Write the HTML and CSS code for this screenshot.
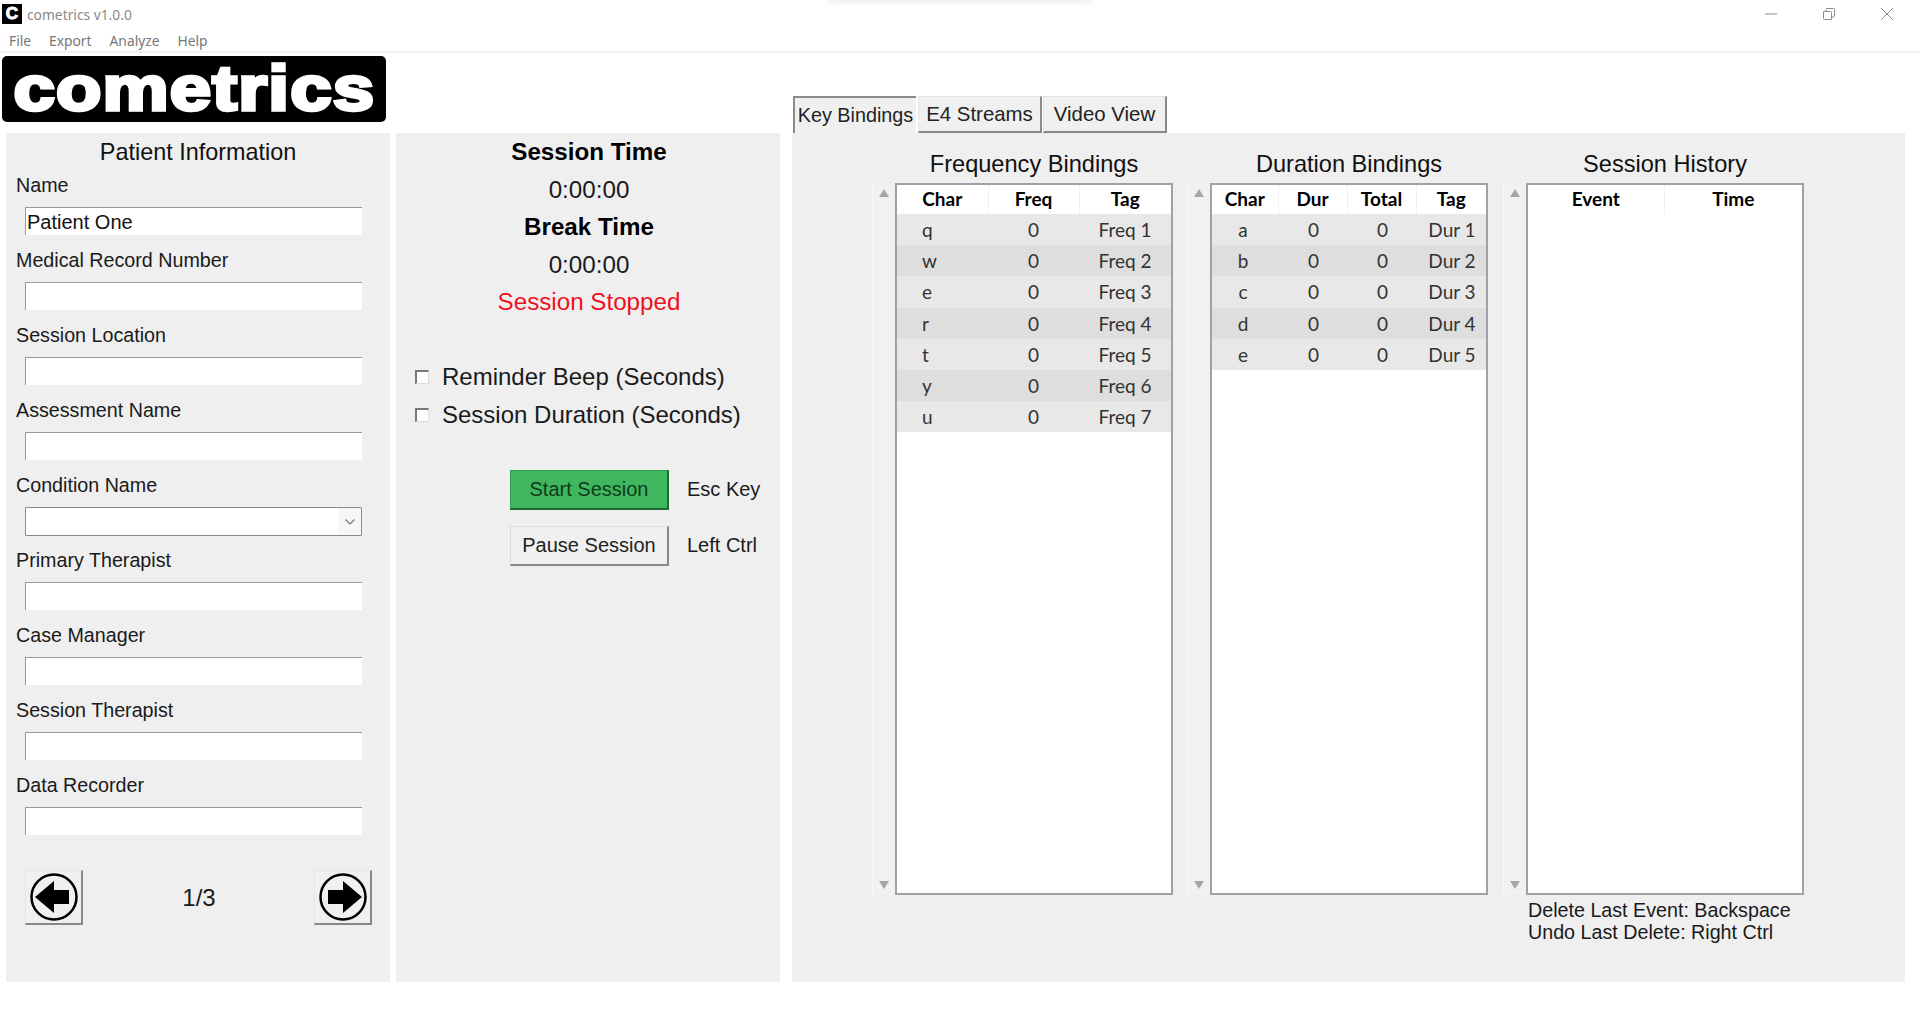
FILE: index.html
```html
<!DOCTYPE html>
<html lang="en">
<head>
  <meta charset="UTF-8" />
  <title>cometrics v1.0.0</title>
  <link rel="stylesheet" href="styles.css">
</head>
<body>
  <div class="window-shadow"></div>

  <header class="titlebar">
    <span class="app-icon">C</span>
    <span class="app-title">cometrics v1.0.0</span>
    <div class="window-controls">
      <svg width="14" height="14" viewBox="0 0 14 14"><path d="M1 7h12" /></svg>
      <svg width="14" height="14" viewBox="0 0 14 14"><path d="M1.5 4.5h7a1 1 0 0 1 1 1v7h-7a1 1 0 0 1-1-1z M4 4.5V2.5a1 1 0 0 1 1-1h6.5a1 1 0 0 1 1 1V9a1 1 0 0 1-1 1h-2" /></svg>
      <svg width="14" height="14" viewBox="0 0 14 14"><path d="M1 1l12 12M13 1L1 13" /></svg>
    </div>
  </header>

  <nav class="menubar">
    <span>File</span>
    <span>Export</span>
    <span>Analyze</span>
    <span>Help</span>
  </nav>

  <main class="workspace">
    <div class="logo"><span class="logo-text">cometrics</span></div>

    <div class="tabs">
      <div class="tab tab-active">Key Bindings</div>
      <div class="tab">E4 Streams</div>
      <div class="tab">Video View</div>
    </div>

    <!-- Patient form -->
    <section class="panel patient-panel">
      <h2 class="patient-title">Patient Information</h2>

      <div class="field">
        <label>Name</label>
        <input type="text" value="Patient One" />
      </div>
      <div class="field">
        <label>Medical Record Number</label>
        <input type="text" />
      </div>
      <div class="field">
        <label>Session Location</label>
        <input type="text" />
      </div>
      <div class="field">
        <label>Assessment Name</label>
        <input type="text" />
      </div>
      <div class="field">
        <label>Condition Name</label>
        <div class="combo">
          <span class="combo-text"></span>
          <span class="combo-arrow">
            <svg width="12" height="8" viewBox="0 0 12 8"><path d="M1.5 1.5L6 6l4.5-4.5" /></svg>
          </span>
        </div>
      </div>
      <div class="field">
        <label>Primary Therapist</label>
        <input type="text" />
      </div>
      <div class="field">
        <label>Case Manager</label>
        <input type="text" />
      </div>
      <div class="field">
        <label>Session Therapist</label>
        <input type="text" />
      </div>
      <div class="field">
        <label>Data Recorder</label>
        <input type="text" />
      </div>

      <div class="pager">
        <button class="arrow-btn">
          <svg width="50" height="48" viewBox="0 0 50 48">
            <circle cx="25" cy="24" r="22.5" />
            <path class="arrow-fill" d="M6 24L25 8v9h15v14H25v9z" />
          </svg>
        </button>
        <span class="page-num">1/3</span>
        <button class="arrow-btn">
          <svg width="50" height="48" viewBox="0 0 50 48">
            <circle cx="25" cy="24" r="22.5" />
            <path class="arrow-fill" d="M44 24L25 8v9H10v14h15v9z" />
          </svg>
        </button>
      </div>
    </section>

    <!-- Session status -->
    <section class="panel session-panel">
      <div class="status-line status-head">Session Time</div>
      <div class="status-line">0:00:00</div>
      <div class="status-line status-head">Break Time</div>
      <div class="status-line">0:00:00</div>
      <div class="status-line status-stopped">Session Stopped</div>

      <div class="check-list">
        <div class="check-row"><span class="checkbox"></span>Reminder Beep (Seconds)</div>
        <div class="check-row"><span class="checkbox"></span>Session Duration (Seconds)</div>
      </div>

      <div class="action-row">
        <button class="action-btn start-btn">Start Session</button>
        <span>Esc Key</span>
      </div>
      <div class="action-row">
        <button class="action-btn">Pause Session</button>
        <span>Left Ctrl</span>
      </div>
    </section>

    <!-- Key bindings tab -->
    <section class="panel bindings-panel">
      <div class="binding">
        <h3 class="binding-title">Frequency Bindings</h3>
        <div class="scroll-strip"><span class="scroll-up"></span><span class="scroll-down"></span></div>
        <div class="table-box">
          <table class="freq-table">
            <thead>
              <tr><th>Char</th><th>Freq</th><th>Tag</th></tr>
            </thead>
            <tbody>
              <tr><td>q</td><td>0</td><td>Freq 1</td></tr>
              <tr><td>w</td><td>0</td><td>Freq 2</td></tr>
              <tr><td>e</td><td>0</td><td>Freq 3</td></tr>
              <tr><td>r</td><td>0</td><td>Freq 4</td></tr>
              <tr><td>t</td><td>0</td><td>Freq 5</td></tr>
              <tr><td>y</td><td>0</td><td>Freq 6</td></tr>
              <tr><td>u</td><td>0</td><td>Freq 7</td></tr>
            </tbody>
          </table>
        </div>
      </div>

      <div class="binding">
        <h3 class="binding-title">Duration Bindings</h3>
        <div class="scroll-strip"><span class="scroll-up"></span><span class="scroll-down"></span></div>
        <div class="table-box">
          <table class="dur-table">
            <thead>
              <tr><th>Char</th><th>Dur</th><th>Total</th><th>Tag</th></tr>
            </thead>
            <tbody>
              <tr><td>a</td><td>0</td><td>0</td><td>Dur 1</td></tr>
              <tr><td>b</td><td>0</td><td>0</td><td>Dur 2</td></tr>
              <tr><td>c</td><td>0</td><td>0</td><td>Dur 3</td></tr>
              <tr><td>d</td><td>0</td><td>0</td><td>Dur 4</td></tr>
              <tr><td>e</td><td>0</td><td>0</td><td>Dur 5</td></tr>
            </tbody>
          </table>
        </div>
      </div>

      <div class="binding binding-history">
        <h3 class="binding-title">Session History</h3>
        <div class="scroll-strip"><span class="scroll-up"></span><span class="scroll-down"></span></div>
        <div class="table-box">
          <table class="history-table">
            <thead>
              <tr><th>Event</th><th>Time</th></tr>
            </thead>
          </table>
        </div>
        <div class="history-notes">
          <div>Delete Last Event: Backspace</div>
          <div>Undo Last Delete: Right Ctrl</div>
        </div>
      </div>
    </section>
  </main>
</body>
</html>
```

FILE: styles.css
```css
* {
  box-sizing: border-box;
}

body {
  margin: 0;
  height: 1020px;
  overflow: hidden;
  background: white;
  color: #1a1a1a;
  font-family: "Liberation Sans", Arial, sans-serif;
}

/* shadow of another window, just above the screen edge */
.window-shadow {
  position: absolute;
  top: -8px;
  left: 828px;
  width: 264px;
  height: 8px;
  box-shadow: 0 0 8px rgba(0,0,0,0.14);
}

/* window chrome */
.titlebar {
  height: 28px;
  display: flex;
  align-items: center;
  padding-left: 2px;
}

.app-icon {
  width: 20px;
  height: 20px;
  background: #000;
  color: white;
  font-size: 17px;
  font-weight: bold;
  line-height: 20px;
  text-align: center;
  -webkit-text-stroke: 1px white;
}

.app-title {
  margin-left: 5px;
  font-family: "Noto Sans", sans-serif;
  font-size: 13.8px;
  color: #8a8a8a;
}

.window-controls {
  margin-left: auto;
  display: flex;
  gap: 44px;
  padding-right: 26px;
}

.window-controls path {
  fill: none;
  stroke: #8c8c8c;
  stroke-width: 1;
}

.menubar {
  height: 25px;
  display: flex;
  gap: 18px;
  padding: 1px 0 0 9px;
  align-items: center;
  border-bottom: 2px solid #f0f0f0;
  font-family: "Noto Sans", sans-serif;
  font-size: 13.8px;
  color: #777;
}

.workspace {
  display: grid;
  grid-template-columns: 384px 384px 1113px;
  grid-template-rows: 80px 849px;
  column-gap: 6px;
  padding-left: 6px;
}

.logo {
  grid-column: 1 / 3;
  width: 384px;
  height: 66px;
  margin: 3px 0 0 -4px;
  background: #000;
  border-radius: 5px;
  color: white;
  font-size: 63px;
  font-weight: bold;
  line-height: 64px;
  text-align: center;
}

.logo-text {
  display: inline-block;
  letter-spacing: 1px;
  transform: scaleX(1.18);
  -webkit-text-stroke: 3.5px white;
}

.tabs {
  grid-column: 3;
  margin-left: 7px;
  display: flex;
  align-items: flex-end;
  gap: 1px;
}

.tab {
  width: 124px;
  height: 37px;
  background: #f0f0f0;
  border-top: 1px solid #e4e4e4;
  border-left: 1px solid #e4e4e4;
  border-right: 2px solid #8a8a8a;
  border-bottom: 2px solid #8a8a8a;
  font-size: 20.4px;
  line-height: 35px;
  text-align: center;
  color: #222;
}

.tab-active {
  width: 123px;
  margin-right: 1px;
  border-top: 2px solid #8a8a8a;
  border-left: 2px solid #8a8a8a;
  border-right: none;
  border-bottom: none;
  font-size: 19.8px;
}

.panel {
  background: #efefef;
}

/* patient form */
.patient-panel {
  padding-left: 10px;
}

.patient-title {
  margin: 0 0 0 -10px;
  font-size: 23.4px;
  font-weight: normal;
  line-height: 38px;
  text-align: center;
  color: #111;
}

.field {
  margin-bottom: 13px;
}

.field label {
  display: block;
  height: 24px;
  margin: 2px 0 10px;
  font-size: 19.7px;
  line-height: 24px;
}

.field input {
  display: block;
  width: 337px;
  height: 28px;
  margin-left: 9px;
  padding: 1px 0 0 1px;
  background: white;
  border: none;
  border-top: 1px solid #9a9a9a;
  border-left: 1px solid #9a9a9a;
  font-family: inherit;
  font-size: 20px;
  color: #111;
  outline: none;
}

.combo {
  display: flex;
  width: 337px;
  height: 29px;
  margin: 1px 0 -1px 9px;
  background: white;
  border: 1px solid #8a8a8a;
  border-radius: 1px;
}

.combo-text {
  flex: 1;
}

.combo-arrow {
  width: 23px;
  display: flex;
  align-items: center;
  justify-content: center;
  background: #f7f7f7;
}

.combo-arrow path {
  fill: none;
  stroke: #777;
  stroke-width: 1.2;
}

.pager {
  display: flex;
  align-items: center;
  justify-content: space-between;
  width: 347px;
  margin: 35px 0 0 9px;
}

.arrow-btn {
  width: 58px;
  height: 55px;
  padding: 0;
  display: flex;
  align-items: center;
  justify-content: center;
  background: #f0f0f0;
  border: none;
  border-top: 1px solid #e6e6e6;
  border-left: 1px solid #e6e6e6;
  border-right: 2px solid #888;
  border-bottom: 2px solid #888;
}

.arrow-btn circle {
  fill: none;
  stroke: #000;
  stroke-width: 2.5;
}

.arrow-fill {
  fill: #000;
}

.page-num {
  font-size: 24px;
  padding-left: 1px;
}

/* session panel */
.status-line {
  padding-left: 2px;
  font-size: 24.2px;
  line-height: 37.5px;
  text-align: center;
}

.status-head {
  font-weight: bold;
  color: #000;
}

.status-stopped {
  color: #f01020;
}

.check-list {
  margin: 37px 0 36px 19px;
}

.check-row {
  display: flex;
  align-items: center;
  gap: 13px;
  height: 38px;
  font-size: 24px;
}

.checkbox {
  width: 14px;
  height: 14px;
  background: #fff;
  border-top: 2px solid #777;
  border-left: 2px solid #777;
  border-right: 1px solid #ddd;
  border-bottom: 1px solid #ddd;
}

.action-row {
  display: flex;
  align-items: center;
  gap: 18px;
  margin: 0 0 16px 114px;
  font-size: 20px;
}

.action-btn {
  width: 159px;
  height: 40px;
  padding: 0;
  background: #f0f0f0;
  border: none;
  border-top: 1px solid #dcdcdc;
  border-left: 1px solid #dcdcdc;
  border-right: 2px solid #888;
  border-bottom: 2px solid #888;
  font-family: inherit;
  font-size: 20px;
  color: #222;
}

.start-btn {
  background: #3eb75e;
  border-color: #2f9a4a #1f6a33 #1f6a33 #2f9a4a;
  color: #123a1c;
}

/* bindings */
.bindings-panel {
  margin-left: 6px;
  width: 1113px;
  display: flex;
  gap: 14px;
  padding-left: 80px;
}

.binding {
  display: grid;
  grid-template-columns: 23px 278px;
  grid-template-rows: 50px 712px auto;
}

.binding-history {
  margin-left: 1px;
}

.binding-title {
  grid-column: 2;
  margin: 0;
  padding-top: 12px;
  font-size: 23.6px;
  font-weight: normal;
  line-height: 38px;
  text-align: center;
  white-space: nowrap;
  color: #111;
}

.scroll-strip {
  grid-column: 1;
  display: flex;
  flex-direction: column;
  justify-content: space-between;
  align-items: center;
  padding: 6px 0;
  background: #f1f1f1;
  border-left: 1px solid #f7f7f7;
}

.scroll-up {
  border-left: 5px solid transparent;
  border-right: 5px solid transparent;
  border-bottom: 8px solid #a6a6a6;
}

.scroll-down {
  border-left: 5px solid transparent;
  border-right: 5px solid transparent;
  border-top: 8px solid #a6a6a6;
}

.table-box {
  background: white;
  border: 2px solid #a0a0a6;
}

.table-box table {
  width: 100%;
  border-collapse: collapse;
  table-layout: fixed;
  font-family: Lato, sans-serif;
  font-size: 19px;
  color: #333;
}

th {
  height: 29px;
  padding: 0 0 3px;
  background: white;
  border-right: 1px solid #f0f0f0;
  font-weight: bold;
  color: #000;
}

th:last-child {
  border-right: none;
}

td {
  height: 31.2px;
  padding: 0;
  text-align: center;
}

tbody tr:nth-child(odd) {
  background: #e8e8e8;
}

tbody tr:nth-child(even) {
  background: #dedede;
}

.freq-table th:first-child {
  width: 91px;
}

.freq-table th:nth-child(2) {
  width: 91px;
}

.freq-table td:first-child {
  text-align: left;
  padding-left: 25px;
}

.dur-table th:first-child {
  width: 66px;
}

.dur-table th:nth-child(2),
.dur-table th:nth-child(3) {
  width: 69px;
}

.dur-table td {
  padding-left: 2px;
}

.dur-table td:first-child {
  padding: 0 4px 0 0;
}

.history-table th:first-child {
  width: 136px;
}

.history-notes {
  grid-column: 2;
  padding: 4px 0 0 2px;
  font-size: 19.7px;
  line-height: 22px;
}
```
